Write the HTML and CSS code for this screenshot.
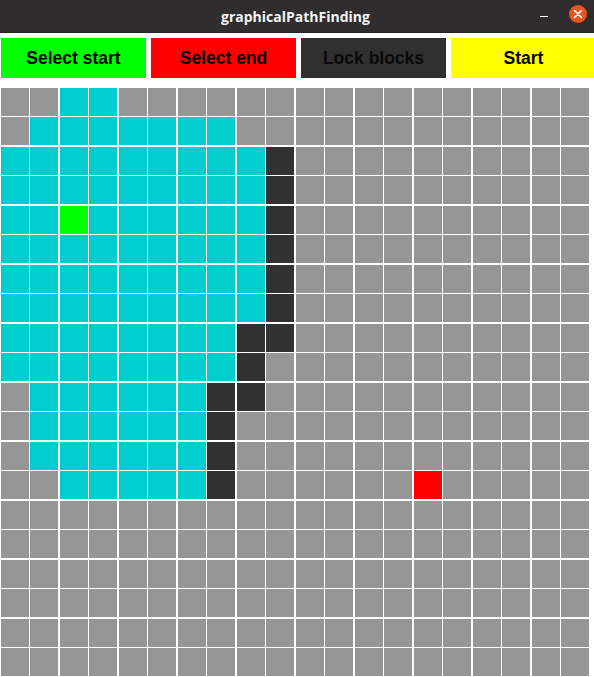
FILE: index.html
```html
<!DOCTYPE html>
<html lang="en">
<head>
    <meta charset="utf-8">
    <title>graphicalPathFinding</title>
    <link rel="stylesheet" href="styles.css">
</head>
<body>
<div class="titlebar">
    <span class="title">graphicalPathFinding</span>
    <span class="win_min"></span>
    <span class="win_close">
        <svg width="18" height="18" viewBox="0 0 18 18">
            <circle cx="9" cy="9" r="9" fill="#e95420"/>
            <path d="M5.5 5.5 L12.5 12.5 M12.5 5.5 L5.5 12.5" stroke="#fff" stroke-width="1.6" stroke-linecap="round"/>
        </svg>
    </span>
</div>
<div class="toolbar">
    <div class="btn btn_start">Select start</div>
    <div class="btn btn_end">Select end</div>
    <div class="btn btn_lock">Lock blocks</div>
    <div class="btn btn_go">Start</div>
</div>
<div id="board" class="board"></div>
<script src="script.js"></script>
</body>
</html>
```

FILE: styles.css
```css
body{
    margin: 0;
    width: 594px;
    height: 677px;
    overflow: hidden;
    background-color: #ffffff;
    font-family: "Liberation Sans", Arial, sans-serif;
}
.titlebar{
    height: 32px;
    background-color: #2f2d2d;
    border-bottom: 1px solid #252323;
    position: relative;
    display: flex;
    align-items: center;
    justify-content: center;
}
.title{
    font-family: "Open Sans", sans-serif;
    font-weight: bold;
    font-size: 14px;
    color: #f2f2f2;
    margin-left: -3px;
}
.win_min{
    position: absolute;
    left: 540px;
    top: 16px;
    width: 8px;
    height: 1px;
    background-color: #ffffff;
}
.win_close{
    position: absolute;
    left: 569px;
    top: 5px;
    width: 18px;
    height: 18px;
}
.win_close svg{
    display: block;
}
.toolbar{
    display: flex;
    gap: 5px;
    padding: 5px 0 0 1px;
    height: 40px;
}
.btn{
    flex: 0 0 145px;
    height: 40px;
    display: flex;
    align-items: center;
    justify-content: center;
    font-weight: bold;
    font-size: 17.5px;
    color: #000000;
}
.btn_start{ background-color: #00ff00; }
.btn_end{ background-color: #ff0000; }
.btn_lock{ background-color: #303030; color: #0a0a0a; }
.btn_go{ background-color: #ffff00; }

.board{
    display: grid;
    grid-template-columns: repeat(10, 29px 30px);
    grid-template-rows: repeat(10, 29px 30px);
    margin: 10px 0 0 1px;
}
.cell{
    width: 28px;
    height: 28px;
    background-color: #969696;
}
.cell.open{ background-color: #00cdcd; }
.cell.wall{ background-color: #313131; }
.cell.from{ background-color: #00ff00; }
.cell.to{ background-color: #ff0000; }
```

FILE: script.js
```js
// . empty, o visited, # wall, S start, E end
var map = [
    "..oo................",
    ".ooooooo............",
    "ooooooooo#..........",
    "ooooooooo#..........",
    "ooSoooooo#..........",
    "ooooooooo#..........",
    "ooooooooo#..........",
    "ooooooooo#..........",
    "oooooooo##..........",
    "oooooooo#...........",
    ".oooooo##...........",
    ".oooooo#............",
    ".oooooo#............",
    "..ooooo#......E.....",
    "....................",
    "....................",
    "....................",
    "....................",
    "....................",
    "...................."
];

var kinds = {".": "", "o": "open", "#": "wall", "S": "from", "E": "to"};
var board = document.getElementById("board");

for (var r = 0; r < map.length; r++) {
    for (var c = 0; c < map[r].length; c++) {
        var cell = document.createElement("div");
        cell.className = ("cell " + kinds[map[r][c]]).trim();
        board.appendChild(cell);
    }
}
```
